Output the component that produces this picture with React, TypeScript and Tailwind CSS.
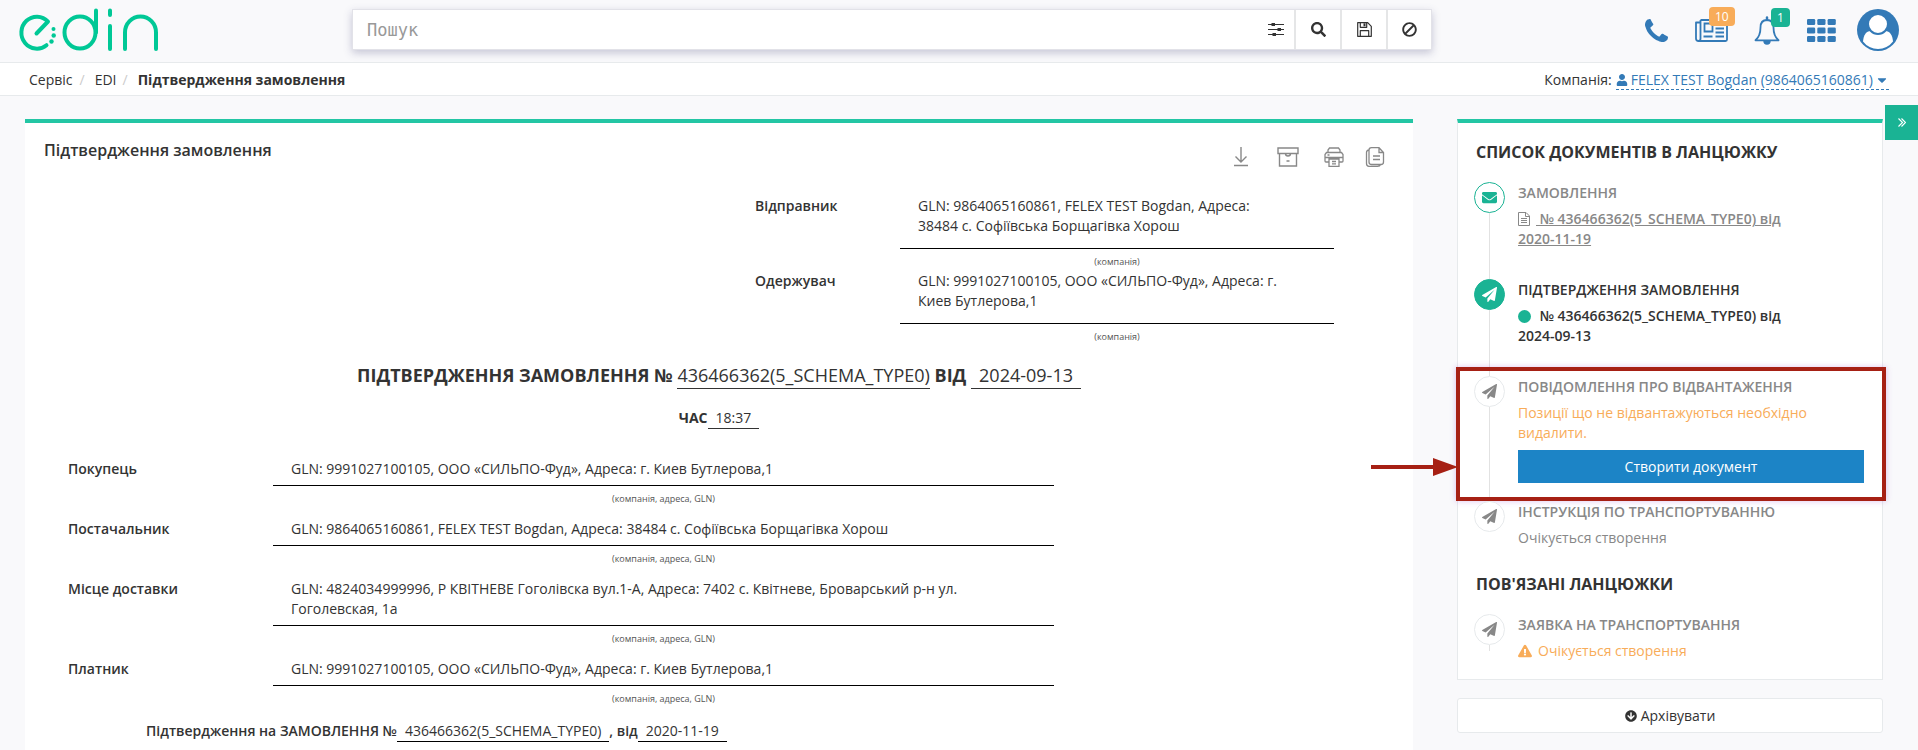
import React from 'react';
import {
  FaSearch,
  FaUser,
  FaCaretDown,
  FaEnvelope,
  FaBan,
  FaArrowCircleDown,
  FaExclamationTriangle,
} from 'react-icons/fa';

function Logo() {
  return (
    <svg className="h-[46px] w-[142px]" viewBox="18 6 142 46" fill="none" stroke="#00c896" strokeWidth="4" strokeLinecap="round" strokeLinejoin="round" aria-hidden="true">
      <path d="M36.500 33.500 L48 21.500 A15.500 16 0 1 0 46.500 45.200" />
      <ellipse cx="80" cy="32.500" rx="15.500" ry="16" />
      <path d="M96 10.500V32.500M110 10.500V15M110 26V49M125 49V32.500A15.500 16 0 0 1 156 32.500V49" />
      <g fill="#00c896" stroke="none">
        <circle cx="53.500" cy="29" r="2" />
        <circle cx="53.700" cy="35.500" r="2.200" />
        <circle cx="51.500" cy="41.500" r="2.200" />
      </g>
    </svg>
  );
}

function SlidersIcon() {
  return (
    <svg className="h-4 w-4" viewBox="0 0 16 16" stroke="#333" fill="#333" aria-hidden="true">
      <path d="M0 2.500H16M0 7.500H16M0 12.500H16" strokeWidth="1" />
      <path d="M3.500 1h3.500v3h-3.500zM9.500 6h3.500v3h-3.500zM4.500 11h3.500v3h-3.500z" stroke="none" />
    </svg>
  );
}

function FloppyIcon() {
  return (
    <svg className="h-[15px] w-[15px]" viewBox="0 0 15 15" fill="none" stroke="#333" strokeWidth="1.200" strokeLinejoin="round" aria-hidden="true">
      <path d="M0.700 0.700H10.700L14.300 4.300V14.300H0.700zM3.300 14V8.700H11.700V14M3.300 1V5.300H9.700V1" />
      <path d="M6.500 1.300h2v3h-2z" fill="#333" stroke="none" />
    </svg>
  );
}

function PlaneIcon() {
  return (
    <svg className="h-[15px] w-[15px]" viewBox="0 0 1792 1792" fill="currentColor" aria-hidden="true">
      <path d="M1764 11q33 24 27 64l-256 1536q-5 29-32 45-14 8-31 8-11 0-24-5l-453-185-242 295q-18 23-49 23-13 0-22-4-19-7-30.500-23.500t-11.500-36.500v-349l864-1059-1069 925-395-162q-37-14-40-55-2-40 32-59l1664-960q15-9 32-9 20 0 36 11z" />
    </svg>
  );
}

function FileIcon() {
  return (
    <svg className="mr-[6px] inline h-[14px] w-3 align-[-2px]" viewBox="0 0 12 14" fill="none" stroke="currentColor" strokeWidth="1" aria-hidden="true">
      <path d="M0.500 0.500H8L11.500 4V13.500H0.500zM7.500 0.500V4.500H11.500M3 6.500h6M3 8.500h6M3 10.500h6" />
    </svg>
  );
}

function PhoneIcon() {
  return (
    <svg className="h-[23px] w-[23px]" viewBox="0 128 1408 1408" fill="currentColor" aria-hidden="true">
      <path d="M1408 1240q0 27-10 70.500t-21 68.500q-21 50-122 106-94 51-186 51-27 0-53-3.500t-57.500-12.500-47-14.500-55.500-20.500-49-18q-98-35-175-83-127-79-264-216t-216-264q-48-77-83-175-3-9-18-49t-20.500-55.500-14.500-47-12.500-57.500-3.500-53q0-92 51-186 56-101 106-122 25-11 68.500-21t70.500-10q14 0 21 3 18 6 53 76 11 19 30 54t35 63.500 31 53.500q3 4 17.500 25t21.500 35.500 7 28.500q0 20-28.500 50t-62 55-62 53-28.500 46q0 9 5 22.500t8.500 20.500 14 24 11.500 19q76 137 174 235t235 174q2 1 19 11.500t24 14 20.500 8.500 22.500 5q18 0 46-28.500t53-62 55-62 50-28.500q14 0 28.500 7t35.500 21.500 25 17.500q25 15 53.500 31t63.500 35 54 30q70 35 76 53 3 7 3 21z" />
    </svg>
  );
}

function NewsIcon() {
  return (
    <svg className="h-[23px] w-[33px]" viewBox="0 0 33 23" fill="none" stroke="currentColor" strokeWidth="1.800" aria-hidden="true">
      <path d="M5.500 1H32V20.500Q32 22 30.500 22H3.500Q1 22 1 19.500V3.500H5.500M5.500 1V19.500Q5.500 22 3.500 22" strokeLinejoin="round" />
      <path d="M9.500 4.500h8v8h-8zM20.500 5.500h8.500M20.500 9.500h8.500M20.500 13.500h8.500M8.500 17.500h9M20.500 17.500h8.500" />
    </svg>
  );
}

function BellIcon() {
  return (
    <svg className="h-[29px] w-[26px]" viewBox="0 0 26 29" fill="none" stroke="currentColor" strokeWidth="1.800" strokeLinejoin="round" aria-hidden="true">
      <path d="M1.500 24.300C5 21.300 6.500 17.500 6.500 11.500C6.500 6.500 9 4 13 4C17 4 19.500 6.500 19.500 11.500C19.500 17.500 21 21.300 24.500 24.300Z" />
      <path d="M13 1.500V4" strokeWidth="2.400" strokeLinecap="round" />
      <path d="M9.300 25h7.400a3.700 3.700 0 0 1-7.400 0z" fill="currentColor" stroke="none" />
    </svg>
  );
}

function GridIcon() {
  return (
    <svg className="h-[23px] w-[29px]" viewBox="0 0 29 23" fill="currentColor" aria-hidden="true">
      {[0, 8.5, 17].map((y) => [0, 10.3, 20.6].map((x) => <rect key={`${x}-${y}`} x={x} y={y} width="8.200" height="6" rx="1.300" />))}
    </svg>
  );
}

function AvatarIcon() {
  return (
    <svg className="h-[42px] w-[42px]" viewBox="0 0 42 42" aria-hidden="true">
      <circle cx="21" cy="21" r="21" fill="#337ab7" />
      <path d="M6 32.500C6.500 26 9.500 22 13.500 22H28.500C32.500 22 35.500 26 36 32.500A18.800 18.800 0 0 1 6 32.500" fill="#fff" />
      <circle cx="21" cy="15" r="10" fill="#fff" stroke="#337ab7" strokeWidth="2" />
    </svg>
  );
}

function Toolbar() {
  return (
    <div className="flex items-center text-[#888]">
      <button type="button" aria-label="Завантажити" className="flex h-6 items-center">
        <svg className="h-5 w-4" viewBox="0 0 16 20" fill="none" stroke="currentColor" strokeWidth="1.400"><path d="M8 0V14.500M2.500 9.500l5.500 5.500 5.500-5.500M1 18.500H15" /></svg>
      </button>
      <button type="button" aria-label="Архів" className="ml-[28px] flex h-6 items-center">
        <svg className="h-5 w-[22px]" viewBox="0 0 22 20" fill="none" stroke="currentColor" strokeWidth="1.400"><path d="M1 1H21V6.500H1zM2.500 6.500V19H19.500V6.500M8.500 6.500C8.500 9.800 13.500 9.800 13.500 6.500M9.500 14h3" /></svg>
      </button>
      <button type="button" aria-label="Друк" className="ml-[25px] flex h-6 items-center">
        <svg className="h-5 w-5" viewBox="0 0 20 20" fill="none" stroke="currentColor" strokeWidth="1.300"><path d="M4 5.500V3L5.500 1h9L16 3V5.500M5 15H2Q1 15 1 14V7.500L2.500 5.500h15L19 7.500V14Q19 15 18 15H15M1 10.500H19M5 12h10v7.300H5zM8 14.500h4M8 16.800h4M3.500 8h2" /></svg>
      </button>
      <button type="button" aria-label="Копіювати" className="ml-[21px] flex h-6 items-center">
        <svg className="h-5 w-5" viewBox="0 0 20 20" fill="none" stroke="currentColor" strokeWidth="1.300"><path d="M4 3V15Q4 17.500 6.500 17.500H16Q18.500 17.500 18.500 15V5.500L14 0.700H6.500Q4 0.700 4 3M14 0.700V5.500H18.500M4 3Q1.500 3 1.500 5.500V16.500Q1.500 19.300 4 19.300H12.500Q15 19.300 15.500 17.500M8 9h7M8 12.500h7" /></svg>
      </button>
    </div>
  );
}

const parties = [
  { label: 'Відправник', lines: ['GLN: 9864065160861, FELEX TEST Bogdan, Адреса:', '38484 с. Софіївська Борщагівка Хорош'] },
  { label: 'Одержувач', lines: ['GLN: 9991027100105, ООО «СИЛЬПО-Фуд», Адреса: г.', 'Киев Бутлерова,1'] },
];

const rows = [
  { label: 'Покупець', lines: ['GLN: 9991027100105, ООО «СИЛЬПО-Фуд», Адреса: г. Киев Бутлерова,1'] },
  { label: 'Постачальник', lines: ['GLN: 9864065160861, FELEX TEST Bogdan, Адреса: 38484 с. Софіївська Борщагівка Хорош'] },
  { label: 'Місце доставки', lines: ['GLN: 4824034999996, Р КВІТНЕВЕ Гоголівска вул.1-А, Адреса: 7402 с. Квітневе, Броварський р-н ул.', 'Гоголевская, 1а'] },
  { label: 'Платник', lines: ['GLN: 9991027100105, ООО «СИЛЬПО-Фуд», Адреса: г. Киев Бутлерова,1'] },
];

function Note({ children }: { children: React.ReactNode }) {
  return <div className="pt-[7px] text-center text-[9px] leading-3 text-[#555]">{children}</div>;
}

const rings = {
  done: 'border-[#1ab394] bg-white text-[#1ab394]',
  active: 'border-[#1ab394] bg-[#1ab394] text-white',
  idle: 'border-[#e7eaec] bg-white text-[#888]',
};

const connectors = {
  full: 'w-px flex-1 bg-[#e2e2e2]',
  short: 'h-[6px] w-px bg-[#e2e2e2]',
  none: 'hidden',
};

type StepProps = {
  icon: React.ReactNode;
  kind: keyof typeof rings;
  connector: keyof typeof connectors;
  title: string;
  spacing?: string;
  overlay?: React.ReactNode;
  children: React.ReactNode;
};

function Step({ icon, kind, connector, title, spacing = '', overlay, children }: StepProps) {
  return (
    <li className="relative flex">
      <div className="flex w-[31px] shrink-0 flex-col items-center">
        <span className={`flex h-[31px] w-[31px] shrink-0 items-center justify-center rounded-full border ${rings[kind]}`}>{icon}</span>
        <span className={connectors[connector]} />
      </div>
      <div className={`min-w-0 flex-1 pl-[13px] pt-px ${spacing} ${kind === 'active' ? 'text-[#333]' : 'text-[#888]'}`}>
        <h3 className="pb-[6px] font-semibold">{title}</h3>
        {children}
      </div>
      {overlay}
    </li>
  );
}

function Callout() {
  return (
    <>
      <div className="pointer-events-none absolute -left-[18px] -right-[22px] -top-[9px] bottom-0 border-4 border-[#a62014] shadow-[0_0_6px_rgba(150,60,200,0.3)]" />
      <svg className="pointer-events-none absolute -left-[103px] top-[81px] h-5 w-[87px]" viewBox="0 0 87 20" fill="#a62014" aria-hidden="true">
        <path d="M0 8H62V1L87 10L62 19V12H0z" />
      </svg>
    </>
  );
}

export default function App() {
  return (
    <div className="h-screen overflow-hidden bg-[#f9f9fb] font-['Open_Sans',sans-serif] text-[14px] leading-5 text-[#333]">
      <header className="flex h-[63px] items-center border-b border-[#e7eaec] px-[18px]">
        <a href="#" aria-label="edin" className="mb-1 block"><Logo /></a>
        <form className="mb-[3px] ml-[192px] flex h-[41px] w-[1080px] border border-[#e2e2e8] bg-white shadow-[0_3px_8px_rgba(80,80,130,0.3)]">
          <input aria-label="Пошук" placeholder="Пошук" className="min-w-0 flex-1 px-[14px] font-['DejaVu_Sans_Mono',monospace] text-[17px] outline-none placeholder:text-[#999]" />
          <button type="button" aria-label="Фільтри" className="flex w-[37px] items-center justify-center"><SlidersIcon /></button>
          <button type="button" aria-label="Шукати" className="flex w-[46px] items-center justify-center border-l-2 border-[#e5e6e7]"><FaSearch size={15} /></button>
          <button type="button" aria-label="Зберегти" className="flex w-[46px] items-center justify-center border-l-2 border-[#e5e6e7]"><FloppyIcon /></button>
          <button type="button" aria-label="Очистити" className="flex w-[45px] items-center justify-center border-l-2 border-[#e5e6e7]"><FaBan size={15} className="-scale-x-100" /></button>
        </form>
        <nav className="mb-[2px] ml-auto flex items-center pr-px text-[#337ab7]">
          <a href="#" aria-label="Телефон"><PhoneIcon /></a>
          <a href="#" aria-label="Новини" className="relative ml-[27px]">
            <NewsIcon />
            <span className="absolute -top-[12px] left-[14px] rounded-sm bg-[#f8ac59] px-[6px] text-[12px] leading-[19px] text-white">10</span>
          </a>
          <a href="#" aria-label="Сповіщення" className="relative ml-[26px]">
            <BellIcon />
            <span className="absolute -top-[8px] left-[17px] rounded-sm bg-[#1ab394] px-[6px] text-[12px] leading-[19px] text-white">1</span>
          </a>
          <a href="#" aria-label="Меню" className="ml-[27px]"><GridIcon /></a>
          <a href="#" aria-label="Профіль" className="ml-[21px]"><AvatarIcon /></a>
        </nav>
      </header>

      <div className="flex h-[33px] items-center justify-between border-b border-[#e7eaec] bg-white px-[29px] pt-[2px]">
        <nav className="flex items-center">
          <a href="#">Сервіс</a>
          <span className="pl-[7px] pr-[10px] text-[#ccc]">/</span>
          <a href="#">EDI</a>
          <span className="pl-[6px] pr-[10px] text-[#ccc]">/</span>
          <strong className="font-bold">Підтвердження замовлення</strong>
        </nav>
        <div className="flex items-center">
          Компанія:
          <a href="#" className="ml-1 flex items-center border-b border-dashed border-[#337ab7] leading-[18px] text-[#337ab7]">
            <FaUser size={12} className="mr-[3px]" />
            FELEX TEST Bogdan (9864065160861)
            <FaCaretDown size={14} className="ml-[2px]" />
          </a>
        </div>
      </div>

      <div className="relative flex items-start">
        <main className="ml-[25px] mt-[23px] min-h-screen flex-1 border-t-4 border-[#23c6a4] bg-white">
          <div className="flex items-start justify-between pl-[19px] pr-[28px] pt-[15px]">
            <h1 className="text-[16px] font-semibold leading-6">Підтвердження замовлення</h1>
            <div className="mt-[7px]"><Toolbar /></div>
          </div>

          <section className="ml-auto mr-[79px] mt-[27px] w-[579px]">
            {parties.map((p) => (
              <div key={p.label} className="flex h-[75px]">
                <div className="w-[145px] font-semibold">{p.label}</div>
                <div className="min-w-0 flex-1">
                  <div className="border-b border-black pb-3 pl-[18px]">{p.lines.map((l) => <div key={l}>{l}</div>)}</div>
                  <Note>(компанія)</Note>
                </div>
              </div>
            ))}
          </section>

          <h2 className="mt-[16px] text-center text-[18px] leading-[26px]">
            <strong className="font-bold">ПІДТВЕРДЖЕННЯ ЗАМОВЛЕННЯ №</strong>{' '}
            <span className="inline-block border-b border-[#333]">436466362(5_SCHEMA_TYPE0)</span>{' '}
            <strong className="font-bold">ВІД</strong>{' '}
            <span className="inline-block border-b border-[#333] px-2">2024-09-13</span>
          </h2>
          <div className="mt-[19px] text-center">
            <strong className="font-bold">ЧАС</strong>
            <span className="inline-block border-b border-[#333] px-2">18:37</span>
          </div>

          <section className="mt-[30px] pl-[43px]">
            {rows.map((r) => (
              <div key={r.label} className="flex pb-[14px]">
                <div className="w-[205px] shrink-0 font-semibold">{r.label}</div>
                <div className="w-[781px]">
                  <div className="border-b border-black pb-[6px] pl-[18px]">{r.lines.map((l) => <div key={l}>{l}</div>)}</div>
                  <Note>(компанія, адреса, GLN)</Note>
                </div>
              </div>
            ))}
          </section>
          <div className="pl-[121px] pt-[2px]">
            <strong className="font-semibold">Підтвердження на ЗАМОВЛЕННЯ №</strong>
            <span className="inline-block border-b border-black px-2">436466362(5_SCHEMA_TYPE0)</span>
            <strong className="font-semibold">, від</strong>
            <span className="inline-block border-b border-black px-2">2020-11-19</span>
          </div>
        </main>

        <aside className="ml-11 mr-[35px] mt-[23px] w-[426px] shrink-0">
          <div className="border border-t-4 border-[#e7eaec] border-t-[#23c6a4] bg-white px-[18px] pb-[18px]">
            <h2 className="pt-[17px] text-[16px] font-bold leading-6">СПИСОК ДОКУМЕНТІВ В ЛАНЦЮЖКУ</h2>
            <ul className="-ml-[2px] mt-[18px]">
              <Step icon={<FaEnvelope size={15} />} kind="done" connector="full" spacing="pb-[30px]" title="ЗАМОВЛЕННЯ">
                <a href="#" className="block w-[275px] font-semibold">
                  <FileIcon />
                  <span className="underline">&nbsp;№ 436466362(5_SCHEMA_TYPE0) від 2020-11-19</span>
                </a>
              </Step>
              <Step icon={<PlaneIcon />} kind="active" connector="full" spacing="pb-[30px]" title="ПІДТВЕРДЖЕННЯ ЗАМОВЛЕННЯ">
                <div className="w-[275px] font-semibold">
                  <span className="mr-[5px] inline-block h-[13px] w-[13px] rounded-full bg-[#1ab394] align-[-2px]" />
                  &nbsp;№ 436466362(5_SCHEMA_TYPE0) від 2024-09-13
                </div>
              </Step>
              <Step icon={<PlaneIcon />} kind="idle" connector="full" spacing="pb-[18px]" title="ПОВІДОМЛЕННЯ ПРО ВІДВАНТАЖЕННЯ" overlay={<Callout />}>
                <p className="w-[310px] text-[#f8ac59]">Позиції що не відвантажуються необхідно видалити.</p>
                <button type="button" className="mt-[7px] block h-[33px] w-full bg-[#1c84c6] text-white">Створити документ</button>
              </Step>
              <Step icon={<PlaneIcon />} kind="idle" connector="none" title="ІНСТРУКЦІЯ ПО ТРАНСПОРТУВАННЮ">
                <p>Очікується створення</p>
              </Step>
            </ul>
            <h2 className="pt-6 text-[16px] font-bold leading-6">ПОВ'ЯЗАНІ ЛАНЦЮЖКИ</h2>
            <ul className="-ml-[2px] mt-[18px]">
              <Step icon={<PlaneIcon />} kind="idle" connector="short" title="ЗАЯВКА НА ТРАНСПОРТУВАННЯ">
                <p className="flex items-center gap-[6px] text-[#f8ac59]"><FaExclamationTriangle size={14} />Очікується створення</p>
              </Step>
            </ul>
          </div>
          <button type="button" className="mt-[18px] flex h-[35px] w-full items-center justify-center gap-1 rounded-[3px] border border-[#e7eaec] bg-white">
            <FaArrowCircleDown size={12} />
            Архівувати
          </button>
        </aside>

        <button type="button" aria-label="Згорнути панель" className="absolute right-0 top-[9px] flex h-[35px] w-[33px] items-center justify-center bg-[#1ab394] text-white">
          <svg className="h-[9px] w-2" viewBox="0 0 8 9" fill="none" stroke="currentColor" strokeWidth="1.100" aria-hidden="true"><path d="M0.500 0.500l4 4-4 4M3.500 0.500l4 4-4 4" /></svg>
        </button>
      </div>
    </div>
  );
}
